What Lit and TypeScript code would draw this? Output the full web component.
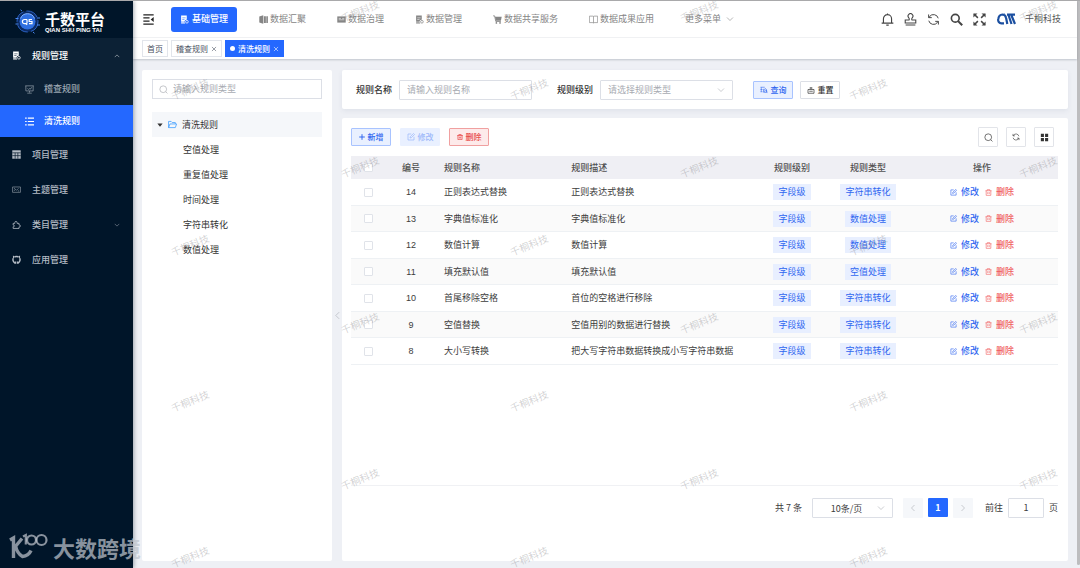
import { LitElement, html, css, svg } from "lit";
import { customElement } from "lit/decorators.js";
import { classMap } from "lit/directives/class-map.js";

const glyphs: Record<string, unknown> = {
  fold: svg`<path d="M.5 1.200h15M.5 5.700h9M.5 10.300h9M.5 14.800h15" stroke-width="1.700"/><path d="M15.500 4.500v7L11.200 8z" fill="currentColor" stroke="none"/>`,
  book: svg`<path d="M2 1h10v7.5a3.6 3.6 0 0 0-2.5 6.5H2z" fill="currentColor" stroke="none"/><path d="M4 5h6M4 8h4" stroke="var(--hole, #fff)" stroke-width="1"/><path d="M1.5 12.5h7"  stroke="var(--hole, #fff)" stroke-width="1"/><circle cx="12.3" cy="12" r="2.4" stroke-width="1.3"/>`,
  columns: svg`<path d="M.5 2.500 7.500.5v15l-7-2z" fill="currentColor" stroke="none"/><path d="M8.500 2h3.700v12H8.500zM13 2h2.800v12H13z" fill="currentColor" stroke="none"/>`,
  card: svg`<path d="M.5 2.500h15v11H.5z" fill="currentColor" stroke="none"/><path d="M3 6h4M9 6h4M3 8.500h10" stroke="#fff" stroke-width="1"/>`,
  cart: svg`<path d="M3.500 3H15.500l-1.500 7H5z" fill="currentColor" stroke="none"/><path d="M.2 1.500h2.600L5 11.500h9" stroke-width="1.500"/><circle cx="6" cy="14" r="1.500" fill="currentColor" stroke="none"/><circle cx="12.500" cy="14" r="1.500" fill="currentColor" stroke="none"/>`,
  open: svg`<path d="M.7 2h6q1.300 0 1.300 1 0-1 1.300-1h6v11.500h-6q-1.300 0-1.300 1 0-1-1.300-1h-6zM8 3v11"/>`,
  board: svg`<path d="M.5 1.500h15M1.500 1.500v9h13v-9M8 10.500V13.500M4 14.500h8M4.500 6l2 2 2-2 1 1.500 2.500-3.500"/>`,
  list: svg`<path d="M5 2h11M5 8h11M5 14h11" stroke-width="2.200"/><path d="M.2 2h2.800M.2 8h2.800M.2 14h2.800" stroke-width="2.200"/>`,
  grid: svg`<path d="M.5.5h15v15H.5z" fill="currentColor" stroke="none"/><path d="M.5 5h15M.5 10h15M5.600 5v10.500M10.400 5v10.500" stroke="#001529" stroke-width="1.200"/>`,
  theme: svg`<path d="M1 3.500h14v9.500H1zM3.500 10.500 6 7.500l2 2 3.500-3.500M3.500 6h2M10.500 10.500h2"/>`,
  puzzle: svg`<path d="M2 6H5V4.500a2 2 0 1 1 4 0V6h3.500v3h.9a1.600 1.600 0 1 1 0 3.200h-.9V15H2v-3h.7a1.500 1.500 0 0 0 0-3H2z" stroke-width="1.400"/>`,
  github: svg`<path d="M5.700 14.300A6.300 6.300 0 0 1 2.300 5.800M10.300 14.300a6.300 6.300 0 0 0 3.400-8.500M5 3.200q3-1 6 0" stroke-width="2.600"/><path d="M1.700 6.500V1l4 2zM14.300 6.500V1l-4 2zM5.200 11.500h2.200v4H4.500zM10.800 11.500H8.600v4h2.900z" fill="currentColor" stroke="none"/>`,
  down: svg`<path d="m2 5 6 6 6-6"/>`,
  up: svg`<path d="m2 11 6-6 6 6"/>`,
  left: svg`<path d="m11 2-6 6 6 6"/>`,
  right: svg`<path d="m5 2 6 6-6 6"/>`,
  close: svg`<path d="m2.500 2.500 11 11M13.500 2.500l-11 11" stroke-width="1.500"/>`,
  caret: svg`<path d="M1 4h14L8 12.500z" fill="currentColor" stroke="none"/>`,
  folder: svg`<path d="M1 13.500V2.500h4.500l2 2h5.500V7M1 13.500 3.500 7H15.300l-2.300 6.500z" stroke-width="1.400"/>`,
  search: svg`<circle cx="7.500" cy="7.500" r="6"/><path d="m12 12 3 3"/>`,
  searchBold: svg`<circle cx="6.500" cy="6.500" r="4.800" stroke-width="2"/><path d="m10 10 5 5" stroke-width="2.600"/>`,
  bell: svg`<path d="M3 12.500V7a5 5 0 0 1 10 0v5.500M.8 12.500h14.400M8 2V.7M6.500 15h3" stroke-width="1.400"/>`,
  stamp: svg`<path d="M1.500 8.700h4.700q.8-1.500-.5-3a3 3 0 1 1 4.600 0q-1.300 1.500-.5 3h4.700v3.500h-13zM2 14.800h12" stroke-width="1.300"/>`,
  refresh: svg`<path d="M2.200 9.500a6 6 0 0 0 10.600 2.200l1-1.200M13.800 6.500A6 6 0 0 0 3.200 4.300l-1 1.200M2 1.800v3.900h3.900M14 14.200v-3.900h-3.900" stroke-width="1.200"/>`,
  full: svg`<path d="m1.500 1.500 4.500 4.500M14.500 1.500 10 6M1.500 14.500 6 10M14.500 14.500 10 10" stroke-width="1.800"/><path d="M.5.5h5l-5 5zM15.500.5v5l-5-5zM.5 15.500v-5l5 5zM15.500 15.500h-5l5-5z" fill="currentColor" stroke="none"/>`,
  query: svg`<path d="M1 2.500h8.500M1 7h4M1 11.500h4M2.500 2.500v9M7 12.500V6.500h3l1-1.500 2 2v5.500M7 12.500h3.500"/><circle cx="11.500" cy="10.500" r="2.300"/><path d="m13.200 12.200 2 2"/>`,
  reset: svg`<path d="M2 7h12v7.500H2zM8 6.500V2M5 4h6M4.500 10.500h7" stroke-width="1.400"/>`,
  plus: svg`<path d="M8 .5v15M.5 8h15" stroke-width="2.600"/>`,
  edit: svg`<path d="M8.500 2H2v12h12V7.500M6 10l.5-2.500 6.500-6.500 2 2-6.500 6.500z" stroke-width="1.400"/>`,
  trash: svg`<path d="M1 4h14M5 4V1.500h6V4M2.700 4v10.500h10.600V4M6.300 7v4.500M9.700 7v4.500" stroke-width="1.400"/>`,
  trashBold: svg`<path d="M.5 4h15M5 4V1.200h6V4M2.500 4v11h11V4M6.300 7v5M9.700 7v5" stroke-width="2"/>`,
  tiles: svg`<path d="M1.500 1.500h5.500v5.500H1.500zM9 1.500h5.500v5.500H9zM1.500 9h5.500v5.500H1.500zM9 9h5.500v5.500H9z" fill="currentColor" stroke="none"/>`,
};

const icon = (name: string, size = "") => html`<svg class="icon ${size}" viewBox="0 0 16 16" aria-hidden="true">${glyphs[name]}</svg>`;

const shared = css`
  :host { display: block; }
  * { box-sizing: border-box; }
  button, input, select { font: inherit; color: inherit; margin: 0; border-radius: 1px; }
  button { cursor: pointer; display: inline-flex; align-items: center; justify-content: center; background: none; border: 0; padding: 0; white-space: nowrap; }
  a { color: inherit; text-decoration: none; }
  ul { list-style: none; margin: 0; padding: 0; }
  .icon { width: 9px; height: 9px; flex: none; fill: none; stroke: currentColor; stroke-width: 1.2; display: block; }
  .icon.xs { width: 6px; height: 6px; }
  .icon.sm { width: 8px; height: 8px; }
  .icon.md { width: 11px; height: 11px; }
  .icon.lg { width: 13px; height: 13px; }
`;

@customElement("side-menu")
class SideMenu extends LitElement {
  static styles = [shared, css`
    :host { background: #001529; color: #b4bcc5; width: 133px; flex: none; z-index: 2; box-shadow: 1px 0 4px rgba(0, 21, 41, 0.35); }
    .brand { height: 37px; display: flex; align-items: center; gap: 5px; padding: 4px 0 0 15px; color: #fff; }
    .emblem { width: 25px; height: 25px; flex: none; }
    .names { display: flex; flex-direction: column; }
    .cn { font-size: 15px; line-height: 17px; font-weight: 700; }
    .en { font: 700 6px/7px "Liberation Sans", sans-serif; white-space: nowrap; }
    .item { height: 35px; display: flex; align-items: center; gap: 11px; padding: 0 13px 0 12px; font-weight: 500; }
    .label { flex: 1; }
    .open { background: #0c2135; }
    .open .top { color: #fff; --hole: #0c2135; }
    .sub { height: 32px; padding-left: 25px; gap: 10px; color: #9aa5b0; }
    .sub.active { background: #2468ff; color: #fff; }
    .thin { color: #8e99a4; }
  `];
  render() {
    return html`
      <div class="brand">
        <svg class="emblem" viewBox="0 0 25 25" aria-hidden="true">
          <circle cx="12.500" cy="12.500" r="10.500" fill="#0b2a63" stroke="#2b62c4" stroke-width="1" stroke-dasharray="13 3"/>
          <circle cx="12.500" cy="12.500" r="8" fill="#2f6fe0"/>
          <path d="M.5 9.500h3M.5 15h3M22 9h3M22 16h3M7 2 5.500.8M18 23l1.500 1.300" stroke="#4b8af5"/>
          <path d="M5.500 9.500a7.500 7.500 0 0 1 14 0" fill="none" stroke="#86b6ff"/>
          <path d="M12 10.500H9.500a2 2 0 0 0 0 4.200H11l1.200 1M12 10.500v4M17 10.500h-2.800v2H17v2.200h-3" fill="none" stroke="#fff" stroke-width="1.200"/>
        </svg>
        <div class="names"><span class="cn">千数平台</span><span class="en">QIAN SHU PING TAI</span></div>
      </div>
      <nav>
        <div class="open">
          <a class="item top" href="#">${icon("book")}<span class="label">规则管理</span>${icon("up", "xs")}</a>
          <a class="item sub" href="#">${icon("board")}<span class="label">稽查规则</span></a>
          <a class="item sub active" href="#">${icon("list")}<span class="label">清洗规则</span></a>
        </div>
        <a class="item" href="#">${icon("grid")}<span class="label">项目管理</span></a>
        <a class="item" href="#"><span class="thin">${icon("theme")}</span><span class="label">主题管理</span></a>
        <a class="item" href="#">${icon("puzzle")}<span class="label">类目管理</span>${icon("down", "xs")}</a>
        <a class="item" href="#">${icon("github")}<span class="label">应用管理</span></a>
      </nav>`;
  }
}

@customElement("top-bar")
class TopBar extends LitElement {
  static styles = [shared, css`
    :host { background: #fff; box-shadow: 0 1px 2px rgba(0, 21, 41, 0.2); z-index: 1; }
    .bar { height: 37px; display: flex; align-items: center; padding: 0 16px 0 10px; border-bottom: 1px solid #f0f1f3; }
    .fold { color: #222; margin-right: 17px; }
    .nav { display: flex; gap: 12px; flex: 1; color: #858585; }
    .link { height: 25px; display: flex; align-items: center; gap: 2px; padding: 0 9px 0 10px; border-radius: 3px; white-space: nowrap; }
    .link.active { background: #2468ff; color: #fff; --hole: #2468ff; gap: 3px; padding: 0 9px; font-weight: 500; }
    .more { gap: 5px; }
    .tools { display: flex; align-items: center; gap: 10px; color: #444; }
    .user { display: flex; align-items: center; gap: 9px; margin-left: 1px; color: #555; }
    .mark { width: 19px; height: 12px; }
    .tabs { height: 21px; display: flex; align-items: center; gap: 3px; padding: 0 9px; font-size: 8px; color: #495060; }
    .tab { height: 17px; display: flex; align-items: center; gap: 3px; padding: 0 4px; border: 1px solid #e2e5eb; }
    .tab.active { background: #2468ff; border-color: #2468ff; color: #fff; font-weight: 500; }
    .dot { width: 5px; height: 5px; border-radius: 50%; background: #fff; }
  `];
  render() {
    const links = [["book", "基础管理"], ["columns", "数据汇聚"], ["card", "数据治理"], ["book", "数据管理"], ["cart", "数据共享服务"], ["open", "数据成果应用"]];
    return html`
      <header class="bar">
        <button class="fold" aria-label="折叠菜单">${icon("fold", "md")}</button>
        <nav class="nav">
          ${links.map(([g, t], i) => html`<a href="#" class=${classMap({ link: true, active: i === 0 })}>${icon(g)}<span>${t}</span></a>`)}
          <a href="#" class="link more"><span>更多菜单</span>${icon("down", "sm")}</a>
        </nav>
        <div class="tools">
          ${[["bell", "通知"], ["stamp", "审批"], ["refresh", "刷新"], ["searchBold", "搜索"], ["full", "全屏"]].map(([g, t]) => html`<button aria-label=${t}>${icon(g, "lg")}</button>`)}
          <div class="user">
            <svg class="mark" viewBox="0 0 19 12" fill="none" stroke="#1b4fa0" stroke-width="2.200" aria-hidden="true">
              <path d="M7 10.300H4.500A3.300 3.300 0 0 1 1.300 6q.5-4.300 4.200-4.500 3 0 3.600 3.500L10.300 11M7 1.500h.8"/><path d="M10 1.600h8M11.500 2l3 9M14.500 2.500 18 11"/>
            </svg>
            <span>千桐科技</span>
          </div>
        </div>
      </header>
      <nav class="tabs">
        <a class="tab" href="#">首页</a>
        <a class="tab" href="#">稽查规则 ${icon("close", "xs")}</a>
        <a class="tab active" href="#"><i class="dot"></i>清洗规则 ${icon("close", "xs")}</a>
      </nav>`;
  }
}

@customElement("rule-tree")
class RuleTree extends LitElement {
  static styles = [shared, css`
    :host { background: #fff; border-radius: 2px; padding: 9px 10px; width: 190px; flex: none; color: #333; }
    .search { height: 20px; display: flex; align-items: center; gap: 5px; padding: 0 6px; border: 1px solid #dcdfe6; color: #a8abb2; }
    .field { flex: 1; min-width: 0; border: 0; outline: 0; padding: 0; background: none; }
    .field::placeholder { color: #a8abb2; opacity: 1; }
    .tree { margin-top: 13px; }
    .node { height: 25px; display: flex; align-items: center; }
    .root { background: #f5f7fa; padding-left: 5px; gap: 5px; }
    .leaf { padding-left: 31px; }
    .folder { color: #409eff; }
  `];
  render() {
    return html`
      <label class="search">${icon("search")}<input class="field" aria-label="规则类型" placeholder="请输入规则类型"></label>
      <ul class="tree">
        <li class="node root">${icon("caret", "xs")}<span class="folder">${icon("folder")}</span><span>清洗规则</span></li>
        ${["空值处理", "重复值处理", "时间处理", "字符串转化", "数值处理"].map((t) => html`<li class="node leaf">${t}</li>`)}
      </ul>`;
  }
}

const rules = [
  [14, "正则表达式替换", "正则表达式替换", "字符串转化"],
  [13, "字典值标准化", "字典值标准化", "数值处理"],
  [12, "数值计算", "数值计算", "数值处理"],
  [11, "填充默认值", "填充默认值", "空值处理"],
  [10, "首尾移除空格", "首位的空格进行移除", "字符串转化"],
  [9, "空值替换", "空值用别的数据进行替换", "字符串转化"],
  [8, "大小写转换", "把大写字符串数据转换成小写字符串数据", "字符串转化"],
];

@customElement("rule-list")
class RuleList extends LitElement {
  static styles = [shared, css`
    :host { flex: 1; min-width: 0; display: flex; flex-direction: column; gap: 9px; color: #3c3c3c; }
    .card { background: #fff; border-radius: 2px; }
    .filter { height: 39px; display: flex; align-items: center; padding: 0 14px; box-shadow: 0 2px 5px rgba(60, 80, 110, 0.08); }
    .filter label { font-weight: 500; color: #333; margin-right: 7px; white-space: nowrap; }
    .box { height: 20px; border: 1px solid #dcdfe6; background: #fff; outline: 0; padding: 0 7px; min-width: 0; }
    .box::placeholder { color: #a8abb2; opacity: 1; }
    .wide { width: 133px; }
    .pick { position: relative; display: flex; }
    .pick select { appearance: none; width: 100%; }
    .pick .icon { position: absolute; right: 8px; top: 6px; color: #a8abb2; pointer-events: none; }
    .pick .empty { color: #a8abb2; }
    .level { margin-right: 20px; }
    .name { margin-right: 25px; }
    .btn { height: 18px; width: 40px; gap: 3px; font-size: 8px; font-weight: 500; border: 1px solid #dcdfe6; }
    .primary { color: #2f66f0; background: #e9f0ff; border-color: #a8c3ff; }
    .primary:disabled { color: #9cb8fa; border-color: #e9f0ff; cursor: default; }
    .danger { color: #e84c4c; background: #fdeaea; border-color: #f0a0a0; }
    .reset { margin-left: 7px; color: #333; }
    .main { flex: 1; padding: 8px 10px 0 9px; display: flex; flex-direction: column; }
    .tools { display: flex; align-items: center; gap: 9px; height: 22px; }
    .round { width: 20px; height: 20px; border: 1px solid #e2e4e9; color: #333; }
    .right { margin-left: auto; margin-right: 4px; display: flex; gap: 8px; }
    .body { flex: 1; margin-top: 8px; border-bottom: 1px solid #f0f1f4; }
    table { width: 100%; table-layout: fixed; border-collapse: separate; border-spacing: 0; }
    th { height: 23px; background: #efeff4; color: #515151; font-weight: 500; padding: 0; }
    td { height: 27px; padding: 0; border-bottom: 1px solid #eef1f4; text-align: center; white-space: nowrap; }
    tr:nth-child(even) td { height: 26px; background: #fafafa; }
    .c-check { width: 35px; }
    .c-no { width: 50px; }
    .c-name { width: 18%; }
    .c-desc { width: 27%; }
    .c-tag { width: 76px; }
    .c-op { width: 152px; }
    .text { text-align: left; padding-left: 8px; }
    .check { appearance: none; width: 9px; height: 9px; border: 1px solid #e0e3e9; background: #fff; display: block; margin: 0 auto; }
    .num { font-family: "Liberation Sans", sans-serif; }
    .tag { display: inline-block; height: 16px; line-height: 16px; padding: 0 5px; background: #e8efff; color: #2f66f0; vertical-align: middle; }
    .ops { display: flex; justify-content: center; gap: 6px; }
    .ops button { gap: 4px; font-weight: 500; color: #2f66f0; }
    .ops .del { color: #f06060; }
    .ops .icon { width: 7px; height: 7px; }
    .pager { height: 75px; display: flex; align-items: flex-start; justify-content: flex-end; padding-top: 12px; line-height: 20px; white-space: nowrap; }
    .size { width: 81px; margin: 0 10px; }
    .size select { padding: 0 12px 0 0; text-align: center; text-align-last: center; }
    .step { width: 20px; height: 20px; background: #f5f7fa; color: #a8abb2; }
    .page { width: 20px; height: 19px; background: #2468ff; color: #fff; font-weight: 700; margin: 0 5px; }
    .jump { width: 36px; text-align: center; margin: 0 5px; padding: 0; }
    .goto { margin-left: 12px; }
  `];
  render() {
    return html`
      <form class="card filter">
        <label for="name">规则名称</label><input id="name" class="box wide name" placeholder="请输入规则名称">
        <label for="level">规则级别</label>
        <div class="pick wide level"><select id="level" class="box empty"><option>请选择规则类型</option></select>${icon("down", "sm")}</div>
        <button type="button" class="btn primary">${icon("query", "sm")}查询</button>
        <button type="button" class="btn reset">${icon("reset", "sm")}重置</button>
      </form>
      <section class="card main">
        <div class="tools">
          <button class="btn primary">${icon("plus", "xs")}新增</button>
          <button class="btn primary" disabled>${icon("edit", "sm")}修改</button>
          <button class="btn danger">${icon("trashBold", "xs")}删除</button>
          <div class="right">
            <button class="round" aria-label="搜索">${icon("search")}</button>
            <button class="round" aria-label="刷新">${icon("refresh", "sm")}</button>
            <button class="round" aria-label="列设置">${icon("tiles")}</button>
          </div>
        </div>
        <div class="body">
          <table>
            <thead><tr>
              <th class="c-check"><input type="checkbox" class="check" aria-label="全选"></th>
              <th class="c-no">编号</th><th class="c-name text">规则名称</th><th class="c-desc text">规则描述</th>
              <th class="c-tag">规则级别</th><th class="c-tag">规则类型</th><th class="c-op">操作</th>
            </tr></thead>
            <tbody>
              ${rules.map(([no, name, desc, type]) => html`<tr>
                <td><input type="checkbox" class="check" aria-label="选择 ${no}"></td>
                <td class="num">${no}</td><td class="text">${name}</td><td class="text">${desc}</td>
                <td><span class="tag">字段级</span></td><td><span class="tag">${type}</span></td>
                <td><div class="ops"><button>${icon("edit")}修改</button><button class="del">${icon("trash")}删除</button></div></td>
              </tr>`)}
            </tbody>
          </table>
        </div>
        <div class="pager">
          <span>共 7 条</span>
          <div class="pick size"><select class="box" aria-label="每页条数"><option>10条/页</option></select>${icon("down", "sm")}</div>
          <button class="step" aria-label="上一页">${icon("left", "sm")}</button>
          <button class="page">1</button>
          <button class="step" aria-label="下一页">${icon("right", "sm")}</button>
          <label class="goto" for="jump">前往</label><input id="jump" class="box jump" .value=${"1"}><span>页</span>
        </div>
      </section>`;
  }
}

@customElement("app-root")
class AppRoot extends LitElement {
  static styles = [shared, css`
    :host { position: relative; display: flex; min-height: 100vh; overflow: hidden; border-top: 1px solid #a9a9ab; background: #eef0f5; font: 9px/12px "Noto Sans CJK SC", sans-serif; box-sizing: border-box; }
    .page { flex: 1; min-width: 0; display: flex; flex-direction: column; }
    .content { flex: 1; display: flex; padding: 11px 9px 7px; }
    .split { width: 10px; color: #b0b4bc; justify-content: center; }
    .rail { width: 3px; background: #bdbdbf; margin-bottom: 3px; border-radius: 0 0 2px 2px; }
    .marks { position: absolute; inset: -29px 0 0 0; z-index: 3; overflow: hidden; pointer-events: none; color: rgba(120, 120, 125, 0.34); font-size: 10px; }
    .row { height: 78px; display: flex; padding-left: 190px; }
    .row:nth-child(even) { padding-left: 20px; }
    .mark { width: 339px; flex: none; display: flex; align-items: center; justify-content: center; }
    .mark span { transform: rotate(-22deg); line-height: 10px; }
    .credit { position: absolute; left: 9px; bottom: 7px; z-index: 4; display: flex; align-items: center; gap: 5px; color: rgba(190, 196, 204, 0.72); font-size: 22px; line-height: 26px; font-weight: 700; }
    .sign { width: 39px; height: 28px; fill: none; stroke: currentColor; }
  `];
  render() {
    return html`
      <side-menu></side-menu>
      <div class="page">
        <top-bar></top-bar>
        <main class="content">
          <rule-tree></rule-tree>
          <button class="split" aria-label="收起">${icon("left")}</button>
          <rule-list></rule-list>
        </main>
      </div>
      <div class="rail"></div>
      <div class="marks" aria-hidden="true">
        ${Array.from({ length: 8 }, () => html`<div class="row">${[0, 1, 2].map(() => html`<div class="mark"><span>千桐科技</span></div>`)}</div>`)}
      </div>
      <div class="credit">
        <svg class="sign" viewBox="0 0 39 28" aria-hidden="true">
          <path d="M1 7 4.500 5v20M13 5.500 6 14M6.500 12.500q1.500 8 7 11 6-.5 8.500-6" stroke-width="3.400"/>
          <path d="M14 3.500 16.800 2v9.500" stroke-width="2.200"/><circle cx="22.500" cy="7" r="4.500" stroke-width="2.200"/><circle cx="32.500" cy="7" r="5" stroke-width="2.200"/>
        </svg>
        <span>大数跨境</span>
      </div>`;
  }
}
